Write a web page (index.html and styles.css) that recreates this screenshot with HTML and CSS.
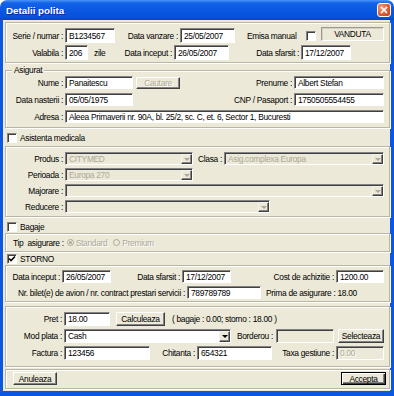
FILE: index.html
```html
<!DOCTYPE html>
<html lang="ro">
  <head>
    <meta charset="utf-8" />
    <title>Detalii polita</title>
    <link rel="stylesheet" href="styles.css">
  </head>
  <body>
    <div class="window">
      <div class="titlebar">
        <span class="title">Detalii polita</span>
        <span class="close">
          <svg width="8" height="8" viewBox="0 0 8 8"><path d="M1 1L7 7M7 1L1 7" stroke="#fff" stroke-width="1.7" /></svg>
        </span>
      </div>

      <div class="client">
        <!-- antet polita -->
        <div class="panel head">
          <div class="row tall">
            <span class="lbl w57">Serie / numar :</span>
            <span class="field w50">B1234567</span>
            <span class="lbl w63">Data vanzare :</span>
            <span class="field w55">25/05/2007</span>
            <span class="emisa">Emisa manual</span>
            <span class="check"></span>
            <span class="status">VANDUTA</span>
          </div>
          <div class="row tall">
            <span class="lbl w57">Valabila :</span>
            <span class="field w23">206</span>
            <span class="unit">zile</span>
            <span class="lbl w63">Data inceput :</span>
            <span class="field w55">26/05/2007</span>
            <span class="lbl w70">Data sfarsit :</span>
            <span class="field w50">17/12/2007</span>
          </div>
        </div>

        <!-- asigurat -->
        <div class="group insured">
          <span class="legend">Asigurat</span>
          <div class="row">
            <span class="lbl w57">Nume :</span>
            <span class="field w68">Panaitescu</span>
            <span class="btn dim search">Cautare</span>
            <span class="lbl w112">Prenume :</span>
            <span class="field w90">Albert Stefan</span>
          </div>
          <div class="row">
            <span class="lbl w57">Data nasterii :</span>
            <span class="field w68">05/05/1975</span>
            <span class="lbl w159">CNP / Pasaport :</span>
            <span class="field w90">1750505554455</span>
          </div>
          <div class="row">
            <span class="lbl w57">Adresa :</span>
            <span class="field w319">Aleea Primaverii nr. 90A, bl. 25/2, sc. C, et. 6, Sector 1, Bucuresti</span>
          </div>
        </div>

        <div class="optrow medical-opt">
          <span class="check"></span>
          <span class="optlbl">Asistenta medicala</span>
        </div>
        <div class="group medical">
          <div class="row">
            <span class="lbl w57">Produs :</span>
            <span class="select off w128"><span class="val">CITYMED</span><span class="arrow"></span></span>
            <span class="lbl w29">Clasa :</span>
            <span class="select off w160"><span class="val">Asig.complexa Europa</span><span class="arrow"></span></span>
          </div>
          <div class="row">
            <span class="lbl w57">Perioada :</span>
            <span class="select off w128"><span class="val">Europa 270</span><span class="arrow"></span></span>
          </div>
          <div class="row">
            <span class="lbl w57">Majorare :</span>
            <span class="select off w319"><span class="val"></span><span class="arrow"></span></span>
          </div>
          <div class="row">
            <span class="lbl w57">Reducere :</span>
            <span class="select off w205"><span class="val"></span><span class="arrow"></span></span>
          </div>
        </div>

        <div class="optrow luggage-opt">
          <span class="check"></span>
          <span class="optlbl">Bagaje</span>
        </div>
        <div class="group luggage">
          <div class="row">
            <span class="tip">Tip&nbsp; asigurare :</span>
            <span class="radio on"></span>
            <span class="dim radiolbl">Standard</span>
            <span class="radio"></span>
            <span class="dim radiolbl">Premium</span>
          </div>
        </div>

        <div class="optrow storno-opt">
          <span class="check checked">
            <svg width="8" height="8" viewBox="0 0 8 8"><path d="M1 3.5L3 5.5L7 1.5" fill="none" stroke="#000" stroke-width="1.6" /></svg>
          </span>
          <span class="optlbl">STORNO</span>
        </div>
        <div class="group storno">
          <div class="row">
            <span class="lbl w54">Data inceput :</span>
            <span class="field w49">26/05/2007</span>
            <span class="lbl w69">Data sfarsit :</span>
            <span class="field w49">17/12/2007</span>
            <span class="lbl w103">Cost de achizitie :</span>
            <span class="field w48">1200.00</span>
          </div>
          <div class="row">
            <span class="lbl w179">Nr. bilet(e) de avion / nr. contract prestari servicii :</span>
            <span class="field w74">789789789</span>
            <span class="note">Prima de asigurare : 18.00</span>
          </div>
        </div>

        <!-- plata -->
        <div class="group payment">
          <div class="row">
            <span class="lbl w56">Pret :</span>
            <span class="field w46">18.00</span>
            <span class="btn calc">Calculeaza</span>
            <span class="note wide">( bagaje : 0.00; storno : 18.00 )</span>
          </div>
          <div class="row">
            <span class="lbl w56">Mod plata :</span>
            <span class="select w167"><span class="val">Cash</span><span class="arrow"></span></span>
            <span class="lbl w42 mr3">Borderou :</span>
            <span class="field off w58"></span>
            <span class="btn pick">Selecteaza</span>
          </div>
          <div class="row">
            <span class="lbl w56">Factura :</span>
            <span class="field w86">123456</span>
            <span class="lbl w45">Chitanta :</span>
            <span class="field w75">654321</span>
            <span class="lbl w62">Taxa gestiune :</span>
            <span class="field off w48"><span class="dim">0.00</span></span>
          </div>
        </div>

        <div class="panel actions">
          <span class="btn cancel">Anuleaza</span>
          <span class="btn default ok">Accepta</span>
        </div>
      </div>
    </div>
  </body>
</html>
```

FILE: styles.css
```css
body {
  margin: 0;
  background: #fff;
}

.window {
  width: 394px;
  height: 396px;
  display: flex;
  flex-direction: column;
  font-family: "Liberation Sans", Arial, sans-serif;
}

.titlebar {
  height: 20px;
  flex: none;
  display: flex;
  align-items: center;
  justify-content: space-between;
  padding: 0 3px 0 6px;
  border-radius: 7px 7px 0 0;
  background: linear-gradient(#4a94f7 0, #1464ea 3px, #0a57e2 50%, #0752dd 85%, #0445cc 100%);
}

.title {
  color: #fff;
  font-weight: bold;
  font-size: 9.8px;
  text-shadow: 1px 1px 0 #0b2a9c;
}

.close {
  width: 14px;
  height: 14px;
  box-sizing: border-box;
  border: 1px solid #fff;
  border-radius: 3px;
  background: radial-gradient(circle at 30% 30%, #f39a78, #d9481f 75%);
  display: flex;
  align-items: center;
  justify-content: center;
}

.client {
  flex: 1;
  background: #ece9d8;
  border: solid #0b56e2;
  border-width: 0 4px 5px 3px;
  padding: 2px 0 0 2px;
  font-size: 8.4px;
  letter-spacing: -0.3px;
  line-height: 10px;
  color: #000;
}

/* etched frames */
.panel,
.group {
  width: 385px;
  box-sizing: border-box;
  border: 1px solid #b9b6a6;
  box-shadow: inset 1px 1px 0 #fff, 1px 1px 0 #fff;
}

.legend {
  display: block;
  width: max-content;
  height: 9px;
  line-height: 9px;
  margin: -5px 0 0 6px;
  padding: 0 2px;
  background: #ece9d8;
}

.row {
  display: flex;
  align-items: center;
  height: 13px;
}

.row.tall {
  height: 15px;
}

.lbl {
  flex: none;
  text-align: right;
  margin-right: 2px;
  white-space: nowrap;
}

.mr3 { margin-right: 3px; }

/* widths */
.w23 { width: 23px; }
.w29 { width: 29px; }
.w42 { width: 42px; }
.w45 { width: 45px; }
.w46 { width: 46px; }
.w48 { width: 48px; }
.w49 { width: 49px; }
.w50 { width: 50px; }
.w54 { width: 54px; }
.w55 { width: 55px; }
.w56 { width: 56px; }
.w57 { width: 57px; }
.w58 { width: 58px; }
.w62 { width: 62px; }
.w63 { width: 63px; }
.w68 { width: 68px; }
.w69 { width: 69px; }
.w70 { width: 70px; }
.w74 { width: 74px; }
.w75 { width: 75px; }
.w86 { width: 86px; }
.w90 { width: 90px; }
.w103 { width: 103px; }
.w112 { width: 112px; }
.w128 { width: 128px; }
.w159 { width: 159px; }
.w160 { width: 160px; }
.w167 { width: 167px; }
.w179 { width: 179px; }
.w205 { width: 205px; }
.w319 { width: 319px; }

/* text boxes */
.field,
.select {
  flex: none;
  align-self: stretch;
  box-sizing: border-box;
  display: flex;
  align-items: center;
  background: #fff;
  border: 1px solid;
  border-color: #848284 #fff #fff #848284;
  box-shadow: inset 1px 1px 0 #404040;
  white-space: nowrap;
  overflow: hidden;
}

.field {
  padding-left: 3px;
}

.field.off,
.select.off {
  background: #ece9d8;
}

.select .val {
  flex: 1;
  padding-left: 3px;
  overflow: hidden;
}

.select.off .val {
  color: #aca899;
}

.select .arrow {
  width: 11px;
  align-self: stretch;
  margin: 1px 0 0;
  box-sizing: border-box;
  display: flex;
  align-items: center;
  justify-content: center;
  background: #ece9d8;
  border: 1px solid;
  border-color: #f4f3ee #404040 #404040 #f4f3ee;
  box-shadow: inset -1px -1px 0 #848284;
}

.select .arrow::after {
  content: "";
  border-top: 3px solid #000;
  border-left: 3px solid transparent;
  border-right: 3px solid transparent;
}

.select.off .arrow::after {
  border-top-color: #aca899;
}

.dim {
  color: #aca899;
  text-shadow: 1px 1px 0 #fff;
}

/* buttons */
.btn {
  flex: none;
  align-self: stretch;
  box-sizing: border-box;
  display: flex;
  align-items: center;
  justify-content: center;
  background: #ece9d8;
  border: 1px solid;
  border-color: #fff #404040 #404040 #fff;
  box-shadow: inset -1px -1px 0 #848284;
  white-space: nowrap;
}

.btn.default {
  border-color: #000;
  box-shadow: inset 1px 1px 0 #fff, inset -1px -1px 0 #404040, inset -2px -2px 0 #848284;
}

.search {
  width: 44px;
  margin: 0 0 0 3px;
  height: 12px;
  align-self: center;
}

.calc {
  width: 49px;
  margin-left: 6px;
}

.pick {
  width: 46px;
  margin-left: 4px;
}

/* check boxes and radios */
.check {
  flex: none;
  width: 10px;
  height: 10px;
  box-sizing: border-box;
  display: flex;
  align-items: center;
  justify-content: center;
  background: #fff;
  border: 1px solid;
  border-color: #848284 #fff #fff #848284;
  box-shadow: inset 1px 1px 0 #404040;
}

.radio {
  flex: none;
  width: 7px;
  height: 7px;
  box-sizing: border-box;
  border-radius: 50%;
  border: 1px solid #aca899;
  background: #ece9d8;
  display: flex;
  align-items: center;
  justify-content: center;
}

.radio.on::after {
  content: "";
  width: 3px;
  height: 3px;
  border-radius: 50%;
  background: #aca899;
}

.optrow {
  display: flex;
  align-items: center;
  height: 11px;
  margin-left: 2px;
}

.optlbl {
  margin-left: 3px;
}

.medical-opt { margin: 4px 0 3px 2px; }
.luggage-opt { margin: 4px 0 1px 2px; }
.storno-opt { margin: 1px 0 1px 2px; }

/* header panel */
.head {
  padding: 5px 0 2px;
}

.head .row + .row {
  margin-top: 2px;
}

.emisa {
  width: 50px;
  margin-left: 12px;
  white-space: nowrap;
}

.head .check {
  margin-left: 9px;
}

.status {
  width: 63px;
  height: 14px;
  margin-left: 5px;
  align-self: flex-start;
  margin-top: -1px;
  box-sizing: border-box;
  display: flex;
  align-items: center;
  justify-content: center;
  border: 1px solid;
  border-color: #9d9a8c #fff #fff #9d9a8c;
  box-shadow: inset 1px 1px 0 #d4d0c8;
}

.unit {
  width: 15px;
  margin-left: 6px;
}

/* groups */
.insured {
  margin-top: 7px;
  padding: 0 0 4px;
}

.insured .row {
  margin-top: 4px;
}

.insured .row:first-of-type {
  margin-top: 1px;
}

.medical {
  padding: 5px 0 3px;
}

.medical .row + .row {
  margin-top: 3px;
}

.luggage .row {
  height: 17px;
}

.tip {
  margin: 0 3px 0 7px;
  white-space: nowrap;
}

.radiolbl {
  margin: 0 6px 0 2px;
}

.storno {
  padding: 4px 0 2px;
}

.storno .row + .row {
  margin-top: 3px;
}

.note {
  margin-left: 5px;
  white-space: nowrap;
}

.note.wide {
  margin-left: 7px;
}

.payment {
  margin-top: 4px;
  padding: 5px 0 6px;
}

.payment .row {
  height: 14px;
}

.payment .row + .row {
  margin-top: 3px;
}

.actions {
  margin-top: 2px;
  height: 20px;
  padding: 2px 3px 3px 7px;
  display: flex;
  justify-content: space-between;
}

.cancel {
  width: 44px;
}

.ok {
  width: 45px;
}
```
